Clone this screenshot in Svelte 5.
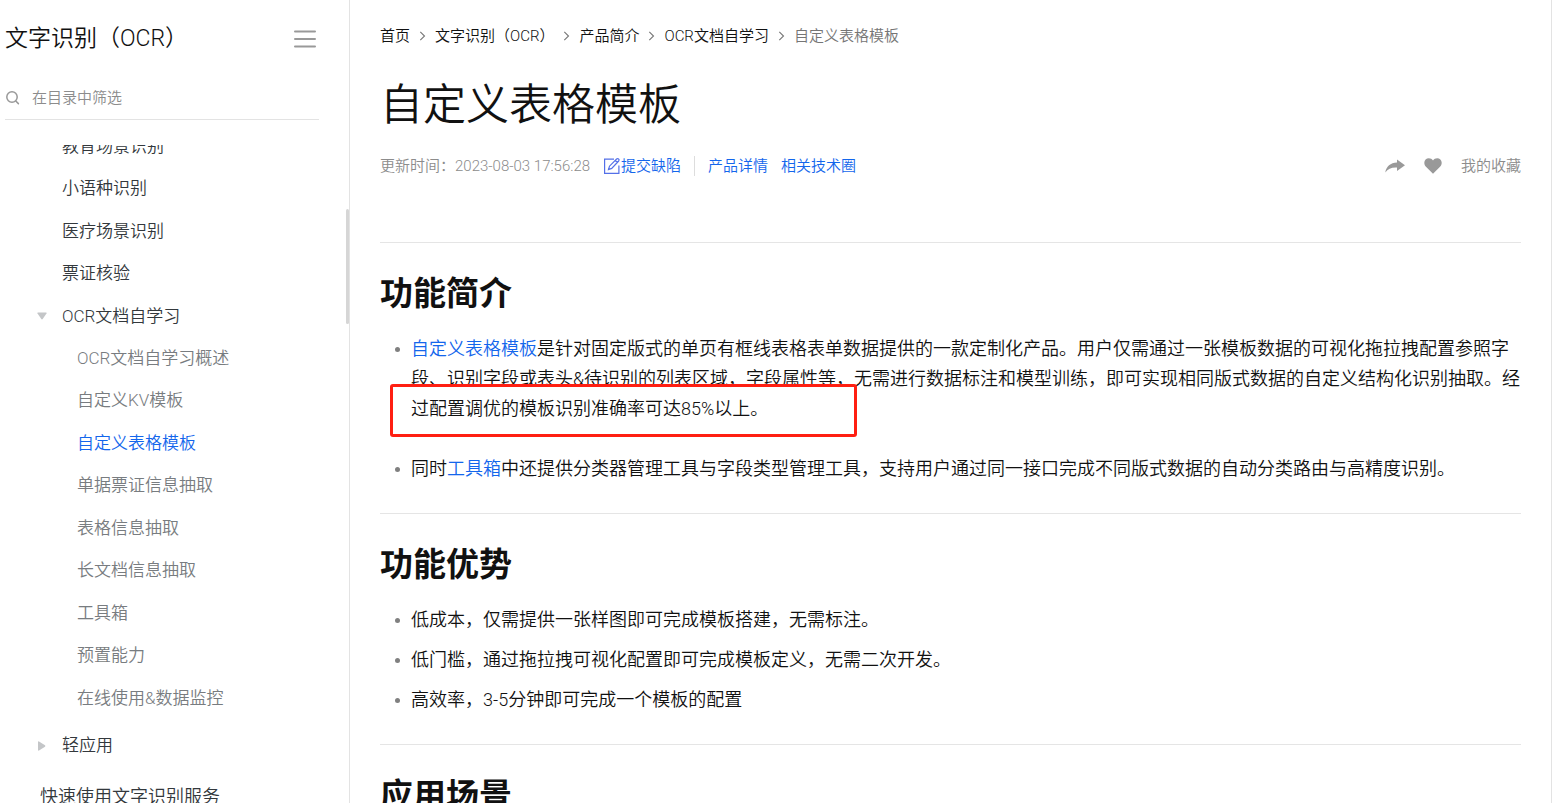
<script lang="ts">
  type NavItem = { label: string; active?: boolean };

  let keyword: string = '';

  const scenes: NavItem[] = [
    { label: '教育场景识别' },
    { label: '小语种识别' },
    { label: '医疗场景识别' },
    { label: '票证核验' },
  ];

  const selfLearning: NavItem[] = [
    { label: 'OCR文档自学习概述' },
    { label: '自定义KV模板' },
    { label: '自定义表格模板', active: true },
    { label: '单据票证信息抽取' },
    { label: '表格信息抽取' },
    { label: '长文档信息抽取' },
    { label: '工具箱' },
    { label: '预置能力' },
    { label: '在线使用&数据监控' },
  ];

  const crumbs: string[] = ['首页', '文字识别（OCR）', '产品简介', 'OCR文档自学习'];

  const advantages: string[] = [
    '低成本，仅需提供一张样图即可完成模板搭建，无需标注。',
    '低门槛，通过拖拉拽可视化配置即可完成模板定义，无需二次开发。',
    '高效率，3-5分钟即可完成一个模板的配置',
  ];
</script>

<div class="page">
  <aside class="sidebar">
    <header class="sidebar-head">
      <h2>文字识别（OCR）</h2>
      <button class="icon-button" type="button" aria-label="收起目录">
        <svg width="22" height="18" viewBox="0 0 22 18" fill="none" stroke="#999" stroke-width="2" stroke-linecap="round">
          <path d="M1 1.5h20M1 9h20M1 16.5h20" />
        </svg>
      </button>
    </header>

    <label class="search">
      <svg width="15" height="15" viewBox="0 0 15 15" fill="none" stroke="#999" stroke-width="1.5" stroke-linecap="round">
        <circle cx="7" cy="7" r="5.2" />
        <path d="M10.8 11l2.6 2.6" />
      </svg>
      <input type="text" placeholder="在目录中筛选" aria-label="在目录中筛选" bind:value={keyword} />
    </label>

    <nav class="tree">
      <ul class="level-two">
        {#each scenes as item}
          <li><a href="#doc">{item.label}</a></li>
        {/each}
        <li>
          <a href="#doc">
            <svg class="caret" width="10" height="8" viewBox="0 0 10 8"><path d="M1 .5h8q1 0 .5 1L5.7 7q-.7.8-1.4 0L.5 1.500Q0 .5 1 .5z" fill="#c4c6c8" /></svg>
            OCR文档自学习
          </a>
          <ul class="level-three">
            {#each selfLearning as item}
              <li><a href="#doc" class:active={item.active}>{item.label}</a></li>
            {/each}
          </ul>
        </li>
        <li class="light-app">
          <a href="#doc">
            <svg class="caret" width="10" height="10" viewBox="0 0 10 10"><path d="M1 1q0-1 1-.5l6 3.800q.8.7 0 1.400l-6 3.800q-1 .5-1-.5z" fill="#c4c6c8" /></svg>
            轻应用
          </a>
        </li>
      </ul>
      <a class="level-one" href="#doc">快速使用文字识别服务</a>
    </nav>
    <div class="scroll-thumb"></div>
  </aside>

  <main class="content">
    <nav class="breadcrumb">
      {#each crumbs as crumb}
        <a href="#doc">{crumb}</a>
        <svg width="7" height="10" viewBox="0 0 7 10" fill="none" stroke="#777" stroke-width="1.1"><path d="M1.300.8L5.500 5 1.300 9.200" /></svg>
      {/each}
      <span>自定义表格模板</span>
    </nav>

    <h1>自定义表格模板</h1>

    <div class="meta">
      <span class="updated">更新时间：2023-08-03 17:56:28</span>
      <a class="report" href="#doc">
        <svg width="18" height="18" viewBox="0 0 18 18" fill="none" stroke="#5470e8" stroke-width="1.2">
          <path d="M11 2.100H1.600V16.400H15.900V8.500" />
          <path d="M5.500 12.500l1-3.300L13.600 2q1-.8 2 0t.1 2L8.700 11.400zM12.300 3.500l2 2" />
        </svg>提交缺陷
      </a>
      <a href="#doc" class="detail">产品详情</a>
      <a href="#doc">相关技术圈</a>
      <div class="actions">
        <button class="icon-button" type="button" aria-label="分享">
          <svg width="20" height="14" viewBox="0 0 20 14"><path d="M12 .5L20 6.200 12 12V8.600C6.500 8.300 3 9.800.3 13.500 1.200 7.500 5.500 4 12 3.600z" fill="#999" /></svg>
        </button>
        <button class="icon-button" type="button" aria-label="收藏">
          <svg width="18" height="16" viewBox="0 0 18 16"><path d="M9 15.800L2.200 9C.8 7.600.3 6.300.3 4.800.3 2.200 2.300.3 4.800.3 6.600.3 8 1.100 9 2.500 10 1.100 11.400.3 13.200.3c2.500 0 4.500 1.900 4.500 4.500 0 1.500-.5 2.800-1.900 4.200z" fill="#999" /></svg>
        </button>
        <a href="#doc">我的收藏</a>
      </div>
    </div>

    <section>
      <h2>功能简介</h2>
      <ul class="intro">
        <li>
          <div>
            <a href="#doc">自定义表格模板</a>是针对固定版式的单页有框线表格表单数据提供的一款定制化产品。用户仅需通过一张模板数据的可视化拖拉拽配置参照字段、识别字段或表头&amp;待识别的列表区域，字段属性等，无需进行数据标注和模型训练，即可实现相同版式数据的自定义结构化识别抽取。经过配置调优的模板识别准确率可达85%以上。
          </div>
          <span class="highlight"></span>
        </li>
        <li>
          <div>同时<a href="#doc">工具箱</a>中还提供分类器管理工具与字段类型管理工具，支持用户通过同一接口完成不同版式数据的自动分类路由与高精度识别。</div>
        </li>
      </ul>
    </section>

    <section>
      <h2>功能优势</h2>
      <ul>
        {#each advantages as text}
          <li><div>{text}</div></li>
        {/each}
      </ul>
    </section>

    <section>
      <h2>应用场景</h2>
    </section>
  </main>
</div>

<style>
  :global(body) {
    margin: 0;
    background: #fff;
  }

  .page {
    display: flex;
    height: 100vh;
    overflow: hidden;
    box-sizing: border-box;
    padding-right: 6px;
    color: #111;
    font-family: Roboto, 'Noto Sans CJK SC', sans-serif;
    font-size: 18px;
    font-weight: 350;
  }

  a {
    color: inherit;
    text-decoration: none;
  }

  ul {
    margin: 0;
    padding: 0;
    list-style: none;
  }

  svg {
    flex: none;
  }

  .icon-button {
    display: flex;
    padding: 0;
    border: 0;
    background: none;
    cursor: pointer;
  }

  .sidebar {
    position: relative;
    display: flex;
    flex: 0 0 350px;
    flex-direction: column;
    box-sizing: border-box;
    padding: 0 30px 0 5px;
    border-right: 1px solid #e3e3e3;
  }

  .sidebar-head {
    display: flex;
    align-items: center;
    justify-content: space-between;
    padding: 18px 3px 16px 0;
  }

  .sidebar-head h2 {
    margin: 0;
    font-size: 23px;
    font-weight: 350;
    line-height: 42px;
  }

  .search {
    display: flex;
    align-items: center;
    gap: 12px;
    height: 43px;
    border-bottom: 1px solid #e3e3e3;
  }

  .search input {
    flex: 1;
    min-width: 0;
    padding: 0;
    border: 0;
    outline: 0;
    background: none;
    font: inherit;
    font-size: 15px;
  }

  .search input::placeholder {
    color: #8c8c8c;
  }

  .tree {
    flex: 1;
    min-height: 0;
    margin-top: 25px;
    overflow: hidden;
    color: #33383c;
    font-size: 17px;
  }

  .tree a {
    display: block;
    position: relative;
    line-height: 42px;
  }

  .tree li:nth-child(even) > a {
    line-height: 43px;
  }

  .level-two {
    margin-top: -20px;
    padding-left: 57px;
  }

  .level-three {
    padding-left: 15px;
    color: #787c80;
  }

  .level-three .active {
    color: #1366ec;
  }

  .caret {
    position: absolute;
    top: 50%;
    left: -25px;
    transform: translateY(-50%);
  }

  .light-app {
    margin-top: 5px;
  }

  .tree .level-one {
    margin-top: 9px;
    padding-left: 35px;
    font-size: 18px;
  }

  .scroll-thumb {
    position: absolute;
    top: 209px;
    right: 0;
    width: 3px;
    height: 115px;
    border-radius: 2px;
    background: #d6d6d6;
  }

  .content {
    flex: 1;
    min-width: 0;
    padding: 21px 30px 0;
    border-right: 1px solid #e3e3e3;
  }

  .breadcrumb {
    display: flex;
    align-items: center;
    gap: 9px;
    font-size: 15px;
    line-height: 30px;
  }

  .breadcrumb span {
    color: #757575;
  }

  h1 {
    margin: 24px 0 16px;
    font-size: 43px;
    font-weight: 350;
    line-height: 60px;
  }

  .meta {
    display: flex;
    align-items: center;
    gap: 13px;
    color: #8c8c8c;
    font-size: 15px;
    line-height: 30px;
  }

  .meta > a {
    color: #1366ec;
  }

  .report {
    display: flex;
    align-items: center;
  }

  .detail {
    padding-left: 13px;
    border-left: 1px solid #ddd;
    line-height: 20px;
  }

  .actions {
    display: flex;
    align-items: center;
    gap: 19px;
    margin-left: auto;
  }

  section {
    padding: 29px 0;
    border-top: 1px solid #e5e5e5;
  }

  .meta + section {
    margin-top: 61px;
  }

  section h2 {
    margin: 0 0 18px;
    font-size: 33px;
    font-weight: 700;
    line-height: 44px;
  }

  section ul {
    display: flex;
    flex-direction: column;
    gap: 10px;
    padding-left: 15px;
    line-height: 30px;
  }

  section .intro {
    gap: 30px;
  }

  section li {
    display: flex;
    position: relative;
    gap: 11px;
  }

  section li::before {
    content: '';
    flex: none;
    width: 5px;
    height: 5px;
    margin-top: 13px;
    border-radius: 50%;
    background: #808080;
  }

  section li a {
    color: #1366ec;
  }

  /* red frame over the accuracy sentence */
  .highlight {
    position: absolute;
    bottom: -13px;
    left: -5px;
    box-sizing: border-box;
    width: 467px;
    height: 53px;
    border: 3px solid #ff1f12;
    border-radius: 3px;
  }
</style>
